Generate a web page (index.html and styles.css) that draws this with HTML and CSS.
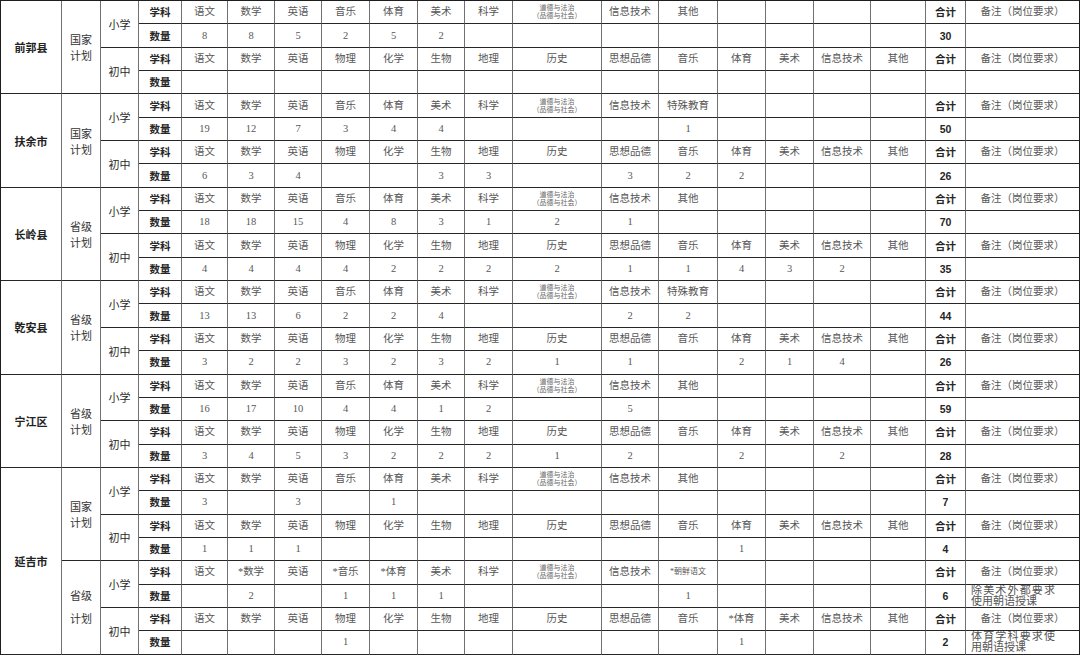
FILE: index.html
```html
<!DOCTYPE html>
<html lang="zh-CN">
<head>
<meta charset="utf-8">
<title>岗位计划表</title>
<link rel="stylesheet" href="styles.css">
</head>
<body>
<table class="sheet">
<colgroup>
<col><col><col><col><col><col><col><col><col><col><col><col><col><col><col><col><col><col><col><col>
</colgroup>
<tbody>
<!-- 前郭县 -->
<tr>
<td rowspan="4" class="k">前郭县</td><td rowspan="4" class="p">国家<br>计划</td><td rowspan="2" class="l">小学</td>
<td class="b">学科</td><td>语文</td><td>数学</td><td>英语</td><td>音乐</td><td>体育</td><td>美术</td><td>科学</td><td class="m">道德与法治<br>（品德与社会）</td><td>信息技术</td><td>其他</td><td></td><td></td><td></td><td></td><td class="b">合计</td><td>备注（岗位要求）</td>
</tr>
<tr>
<td class="b">数量</td><td>8</td><td>8</td><td>5</td><td>2</td><td>5</td><td>2</td><td></td><td></td><td></td><td></td><td></td><td></td><td></td><td></td><td class="b">30</td><td></td>
</tr>
<tr>
<td rowspan="2" class="l">初中</td>
<td class="b">学科</td><td>语文</td><td>数学</td><td>英语</td><td>物理</td><td>化学</td><td>生物</td><td>地理</td><td>历史</td><td>思想品德</td><td>音乐</td><td>体育</td><td>美术</td><td>信息技术</td><td>其他</td><td class="b">合计</td><td>备注（岗位要求）</td>
</tr>
<tr>
<td class="b">数量</td><td></td><td></td><td></td><td></td><td></td><td></td><td></td><td></td><td></td><td></td><td></td><td></td><td></td><td></td><td class="b"></td><td></td>
</tr>
<!-- 扶余市 -->
<tr>
<td rowspan="4" class="k">扶余市</td><td rowspan="4" class="p">国家<br>计划</td><td rowspan="2" class="l">小学</td>
<td class="b">学科</td><td>语文</td><td>数学</td><td>英语</td><td>音乐</td><td>体育</td><td>美术</td><td>科学</td><td class="m">道德与法治<br>（品德与社会）</td><td>信息技术</td><td>特殊教育</td><td></td><td></td><td></td><td></td><td class="b">合计</td><td>备注（岗位要求）</td>
</tr>
<tr>
<td class="b">数量</td><td>19</td><td>12</td><td>7</td><td>3</td><td>4</td><td>4</td><td></td><td></td><td></td><td>1</td><td></td><td></td><td></td><td></td><td class="b">50</td><td></td>
</tr>
<tr>
<td rowspan="2" class="l">初中</td>
<td class="b">学科</td><td>语文</td><td>数学</td><td>英语</td><td>物理</td><td>化学</td><td>生物</td><td>地理</td><td>历史</td><td>思想品德</td><td>音乐</td><td>体育</td><td>美术</td><td>信息技术</td><td>其他</td><td class="b">合计</td><td>备注（岗位要求）</td>
</tr>
<tr>
<td class="b">数量</td><td>6</td><td>3</td><td>4</td><td></td><td></td><td>3</td><td>3</td><td></td><td>3</td><td>2</td><td>2</td><td></td><td></td><td></td><td class="b">26</td><td></td>
</tr>
<!-- 长岭县 -->
<tr>
<td rowspan="4" class="k">长岭县</td><td rowspan="4" class="p">省级<br>计划</td><td rowspan="2" class="l">小学</td>
<td class="b">学科</td><td>语文</td><td>数学</td><td>英语</td><td>音乐</td><td>体育</td><td>美术</td><td>科学</td><td class="m">道德与法治<br>（品德与社会）</td><td>信息技术</td><td>其他</td><td></td><td></td><td></td><td></td><td class="b">合计</td><td>备注（岗位要求）</td>
</tr>
<tr>
<td class="b">数量</td><td>18</td><td>18</td><td>15</td><td>4</td><td>8</td><td>3</td><td>1</td><td>2</td><td>1</td><td></td><td></td><td></td><td></td><td></td><td class="b">70</td><td></td>
</tr>
<tr>
<td rowspan="2" class="l">初中</td>
<td class="b">学科</td><td>语文</td><td>数学</td><td>英语</td><td>物理</td><td>化学</td><td>生物</td><td>地理</td><td>历史</td><td>思想品德</td><td>音乐</td><td>体育</td><td>美术</td><td>信息技术</td><td>其他</td><td class="b">合计</td><td>备注（岗位要求）</td>
</tr>
<tr>
<td class="b">数量</td><td>4</td><td>4</td><td>4</td><td>4</td><td>2</td><td>2</td><td>2</td><td>2</td><td>1</td><td>1</td><td>4</td><td>3</td><td>2</td><td></td><td class="b">35</td><td></td>
</tr>
<!-- 乾安县 -->
<tr>
<td rowspan="4" class="k">乾安县</td><td rowspan="4" class="p">省级<br>计划</td><td rowspan="2" class="l">小学</td>
<td class="b">学科</td><td>语文</td><td>数学</td><td>英语</td><td>音乐</td><td>体育</td><td>美术</td><td>科学</td><td class="m">道德与法治<br>（品德与社会）</td><td>信息技术</td><td>特殊教育</td><td></td><td></td><td></td><td></td><td class="b">合计</td><td>备注（岗位要求）</td>
</tr>
<tr>
<td class="b">数量</td><td>13</td><td>13</td><td>6</td><td>2</td><td>2</td><td>4</td><td></td><td></td><td>2</td><td>2</td><td></td><td></td><td></td><td></td><td class="b">44</td><td></td>
</tr>
<tr>
<td rowspan="2" class="l">初中</td>
<td class="b">学科</td><td>语文</td><td>数学</td><td>英语</td><td>物理</td><td>化学</td><td>生物</td><td>地理</td><td>历史</td><td>思想品德</td><td>音乐</td><td>体育</td><td>美术</td><td>信息技术</td><td>其他</td><td class="b">合计</td><td>备注（岗位要求）</td>
</tr>
<tr>
<td class="b">数量</td><td>3</td><td>2</td><td>2</td><td>3</td><td>2</td><td>3</td><td>2</td><td>1</td><td>1</td><td></td><td>2</td><td>1</td><td>4</td><td></td><td class="b">26</td><td></td>
</tr>
<!-- 宁江区 -->
<tr>
<td rowspan="4" class="k">宁江区</td><td rowspan="4" class="p">省级<br>计划</td><td rowspan="2" class="l">小学</td>
<td class="b">学科</td><td>语文</td><td>数学</td><td>英语</td><td>音乐</td><td>体育</td><td>美术</td><td>科学</td><td class="m">道德与法治<br>（品德与社会）</td><td>信息技术</td><td>其他</td><td></td><td></td><td></td><td></td><td class="b">合计</td><td>备注（岗位要求）</td>
</tr>
<tr>
<td class="b">数量</td><td>16</td><td>17</td><td>10</td><td>4</td><td>4</td><td>1</td><td>2</td><td></td><td>5</td><td></td><td></td><td></td><td></td><td></td><td class="b">59</td><td></td>
</tr>
<tr>
<td rowspan="2" class="l">初中</td>
<td class="b">学科</td><td>语文</td><td>数学</td><td>英语</td><td>物理</td><td>化学</td><td>生物</td><td>地理</td><td>历史</td><td>思想品德</td><td>音乐</td><td>体育</td><td>美术</td><td>信息技术</td><td>其他</td><td class="b">合计</td><td>备注（岗位要求）</td>
</tr>
<tr>
<td class="b">数量</td><td>3</td><td>4</td><td>5</td><td>3</td><td>2</td><td>2</td><td>2</td><td>1</td><td>2</td><td></td><td>2</td><td></td><td>2</td><td></td><td class="b">28</td><td></td>
</tr>
<!-- 延吉市 国家计划 -->
<tr>
<td rowspan="8" class="k">延吉市</td><td rowspan="4" class="p">国家<br>计划</td><td rowspan="2" class="l">小学</td>
<td class="b">学科</td><td>语文</td><td>数学</td><td>英语</td><td>音乐</td><td>体育</td><td>美术</td><td>科学</td><td class="m">道德与法治<br>（品德与社会）</td><td>信息技术</td><td>其他</td><td></td><td></td><td></td><td></td><td class="b">合计</td><td>备注（岗位要求）</td>
</tr>
<tr>
<td class="b">数量</td><td>3</td><td></td><td>3</td><td></td><td>1</td><td></td><td></td><td></td><td></td><td></td><td></td><td></td><td></td><td></td><td class="b">7</td><td></td>
</tr>
<tr>
<td rowspan="2" class="l">初中</td>
<td class="b">学科</td><td>语文</td><td>数学</td><td>英语</td><td>物理</td><td>化学</td><td>生物</td><td>地理</td><td>历史</td><td>思想品德</td><td>音乐</td><td>体育</td><td>美术</td><td>信息技术</td><td>其他</td><td class="b">合计</td><td>备注（岗位要求）</td>
</tr>
<tr>
<td class="b">数量</td><td>1</td><td>1</td><td>1</td><td></td><td></td><td></td><td></td><td></td><td></td><td></td><td>1</td><td></td><td></td><td></td><td class="b">4</td><td></td>
</tr>
<!-- 延吉市 省级计划 -->
<tr>
<td rowspan="4" class="p p2">省级<br>计划</td><td rowspan="2" class="l">小学</td>
<td class="b">学科</td><td>语文</td><td>*数学</td><td>英语</td><td>*音乐</td><td>*体育</td><td>美术</td><td>科学</td><td class="m">道德与法治<br>（品德与社会）</td><td>信息技术</td><td class="t">*朝鲜语文</td><td></td><td></td><td></td><td></td><td class="b">合计</td><td>备注（岗位要求）</td>
</tr>
<tr>
<td class="b">数量</td><td></td><td>2</td><td></td><td>1</td><td>1</td><td>1</td><td></td><td></td><td></td><td>1</td><td></td><td></td><td></td><td></td><td class="b">6</td><td class="x">除美术外都要求使用朝语授课</td>
</tr>
<tr>
<td rowspan="2" class="l">初中</td>
<td class="b">学科</td><td>语文</td><td>数学</td><td>英语</td><td>物理</td><td>化学</td><td>生物</td><td>地理</td><td>历史</td><td>思想品德</td><td>音乐</td><td>*体育</td><td>美术</td><td>信息技术</td><td>其他</td><td class="b">合计</td><td>备注（岗位要求）</td>
</tr>
<tr>
<td class="b">数量</td><td></td><td></td><td></td><td>1</td><td></td><td></td><td></td><td></td><td></td><td></td><td>1</td><td></td><td></td><td></td><td class="b">2</td><td class="x">体育学科要求使用朝语授课</td>
</tr>
</tbody>
</table>
</body>
</html>
```

FILE: styles.css
```css
html, body {
  margin: 0;
  padding: 0;
  background: #ffffff;
}

body {
  width: 1080px;
  height: 655px;
  overflow: hidden;
}

.sheet {
  width: 1080px;
  table-layout: fixed;
  border-spacing: 0;
  border-top: 1px solid #1e1e1e;
  border-left: 1px solid #1e1e1e;
  font-family: "Liberation Serif", "Noto Sans CJK SC", serif;
  font-size: 10.5px;
  line-height: 12px;
  color: #575757;
}

.sheet col:nth-child(1) { width: 61px; }
.sheet col:nth-child(2) { width: 39px; }
.sheet col:nth-child(3) { width: 38px; }
.sheet col:nth-child(4) { width: 43px; }
.sheet col:nth-child(5) { width: 46px; }
.sheet col:nth-child(6) { width: 47px; }
.sheet col:nth-child(7) { width: 47px; }
.sheet col:nth-child(8) { width: 48px; }
.sheet col:nth-child(9) { width: 48px; }
.sheet col:nth-child(10) { width: 47px; }
.sheet col:nth-child(11) { width: 48px; }
.sheet col:nth-child(12) { width: 89px; }
.sheet col:nth-child(13) { width: 57px; }
.sheet col:nth-child(14) { width: 59px; }
.sheet col:nth-child(15) { width: 48px; }
.sheet col:nth-child(16) { width: 48px; }
.sheet col:nth-child(17) { width: 57px; }
.sheet col:nth-child(18) { width: 55px; }
.sheet col:nth-child(19) { width: 40px; }
.sheet col:nth-child(20) { width: 114px; }

.sheet tr {
  height: calc(654px / 28);
}

.sheet td {
  padding: 0;
  border-right: 1px solid #707070;
  border-bottom: 1px solid #262626;
  text-align: center;
  vertical-align: middle;
  white-space: nowrap;
  overflow: hidden;
}

.sheet td:last-child {
  border-right-color: #1e1e1e;
}

/* county name */
.sheet .k {
  font-family: "Noto Sans CJK SC", sans-serif;
  font-weight: 700;
  font-size: 11px;
  color: #222222;
}

/* plan type */
.sheet .p {
  font-family: "Noto Sans CJK SC", sans-serif;
  font-size: 11px;
  line-height: 16px;
  color: #333333;
}

.sheet .p2 {
  line-height: 23px;
}

/* school level */
.sheet .l {
  font-family: "Noto Sans CJK SC", sans-serif;
  font-size: 11px;
  color: #2a2a2a;
}

/* bold labels and totals */
.sheet .b {
  font-family: "Liberation Sans", "Noto Sans CJK SC", sans-serif;
  font-weight: 700;
  font-size: 10.5px;
  color: #262626;
}

/* tiny two-line subject */
.sheet .m {
  font-size: 7px;
  line-height: 8px;
  color: #666666;
}

/* small subject text */
.sheet .t {
  font-size: 8px;
}

/* remark text */
.sheet .x {
  white-space: normal;
  text-align: justify;
  text-align-last: left;
  padding: 0 24px 0 5px;
  font-size: 11px;
  line-height: 11px;
  color: #555555;
}
```
